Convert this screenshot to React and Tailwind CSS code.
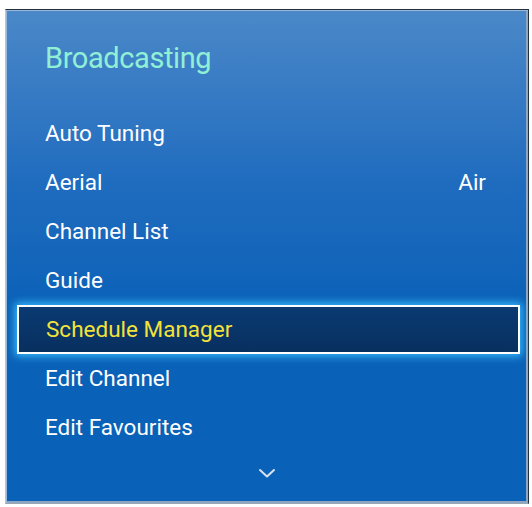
import React from "react";

const items = [
  { label: "Auto Tuning" },
  { label: "Aerial", value: "Air" },
  { label: "Channel List" },
  { label: "Guide" },
  { label: "Schedule Manager", selected: true },
  { label: "Edit Channel" },
  { label: "Edit Favourites" },
];

export default function App() {
  return (
    <div
      className="w-[532px] h-[507px] bg-white pt-[9px] pl-[5px]"
      style={{ fontFamily: "Roboto, 'Liberation Sans', sans-serif" }}
    >
      <div className="w-[524px] h-[495px] border border-[#22303e] border-l-[#b9c4cf] border-b-[#9aa8b6] bg-gradient-to-b from-[#4a88c8] via-[#1f6cbf] via-[35%] to-[#0a62b8] to-[60%] shadow-[inset_1px_1px_0_#9cb8d8,inset_-2px_-2px_0_#8ea6c2] flex flex-col">
        <div className="h-[99px] pl-[39px] pt-[30px]">
          <div className="text-[29px] leading-[36px] text-[#90f0d6] tracking-[-0.4px]">Broadcasting</div>
        </div>
        {items.map((it) =>
          it.selected ? (
            <div
              key={it.label}
              className="h-[49px] ml-[11px] mr-[8px] pl-[27px] flex items-center border-2 border-white bg-gradient-to-b from-[#0a3a72] to-[#08305f] shadow-[0_0_8px_2px_#38bcff] text-[#f3e23a] text-[22.5px]"
            >
              {it.label}
            </div>
          ) : (
            <div
              key={it.label}
              className="h-[49px] pl-[39px] pr-[42px] flex items-center justify-between text-white text-[22.5px]"
            >
              <span>{it.label}</span>
              {it.value && <span>{it.value}</span>}
            </div>
          )
        )}
        <div className="h-[42px] flex items-center justify-center">
          <svg width="18" height="11" viewBox="0 0 18 11">
            <path d="M2 2 L9 8.5 L16 2" fill="none" stroke="#d8e2ee" strokeWidth="2" strokeLinecap="round" strokeLinejoin="round" />
          </svg>
        </div>
      </div>
    </div>
  );
}
